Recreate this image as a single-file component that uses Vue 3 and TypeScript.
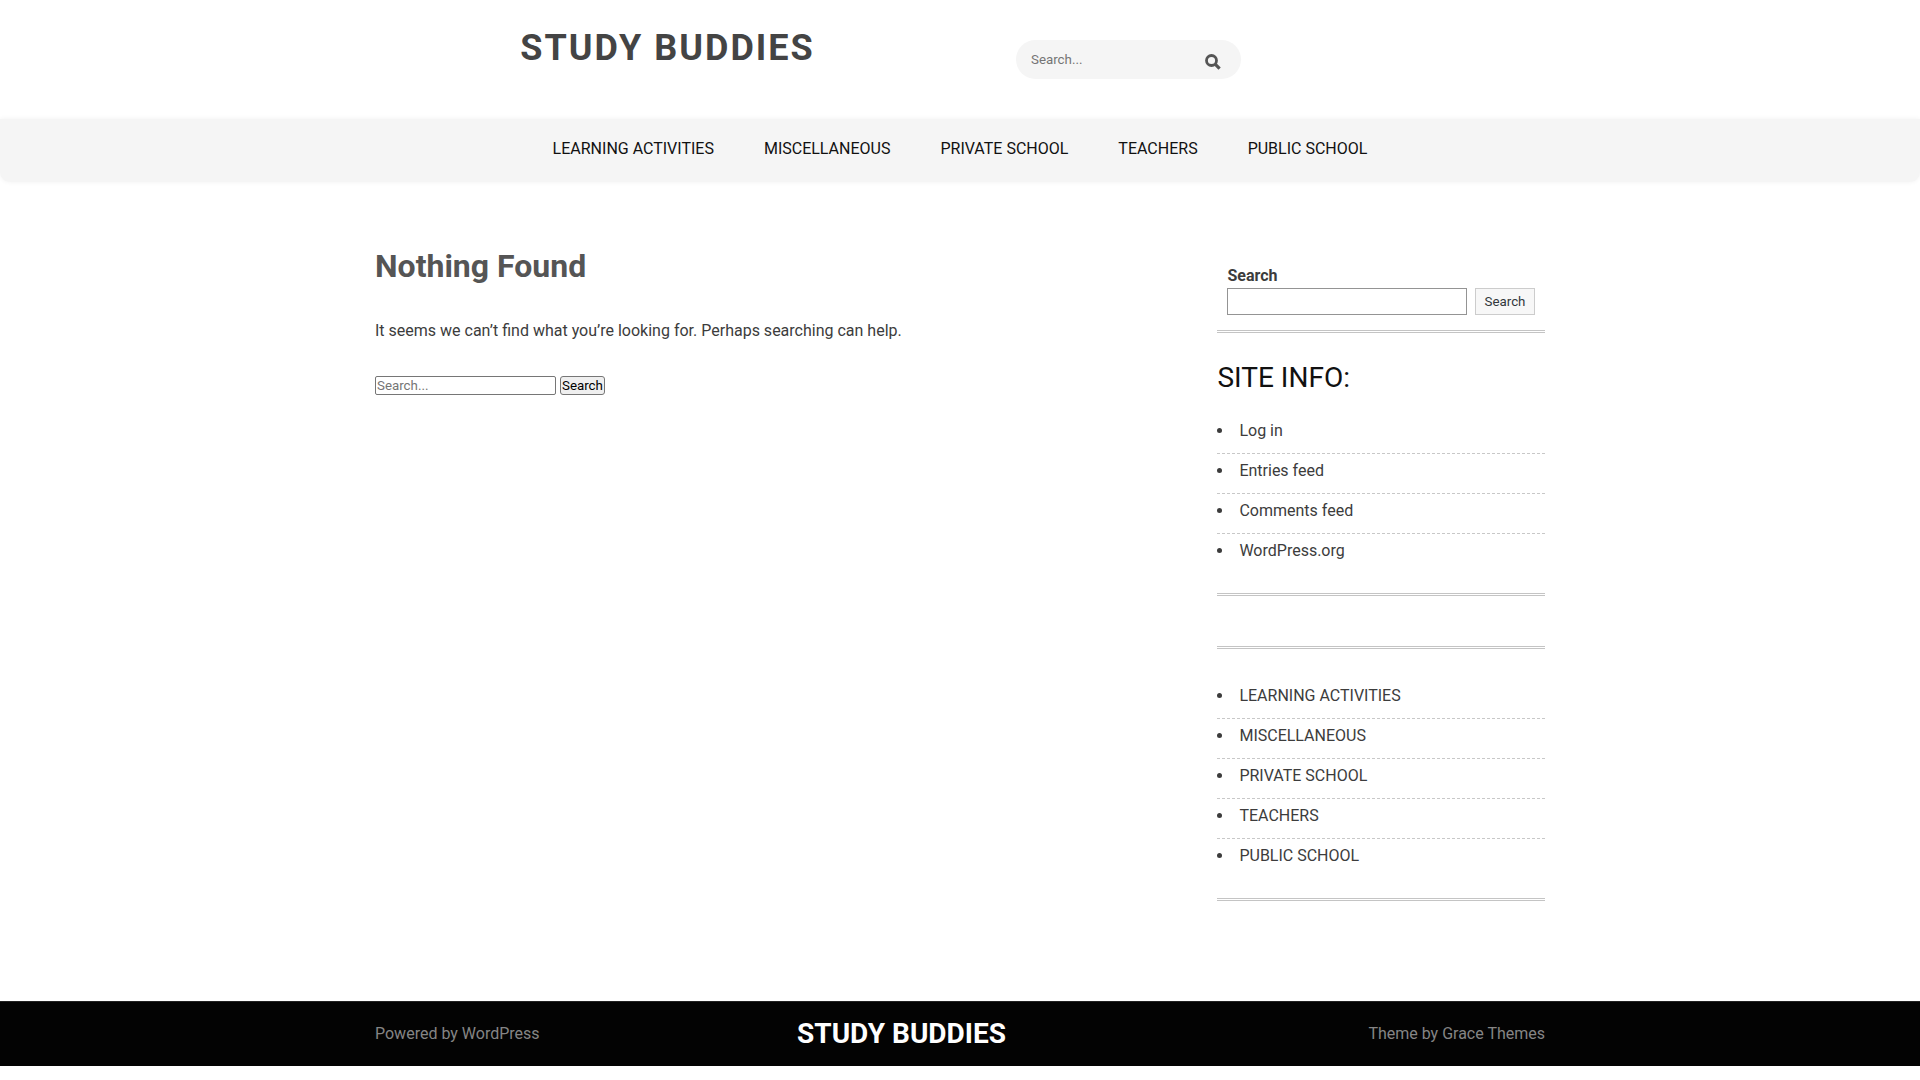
<script setup lang="ts">
import { ref } from 'vue'

interface LinkItem {
  label: string
  href: string
}

const categories: LinkItem[] = [
  { label: 'LEARNING ACTIVITIES', href: '#learning-activities' },
  { label: 'MISCELLANEOUS', href: '#miscellaneous' },
  { label: 'PRIVATE SCHOOL', href: '#private-school' },
  { label: 'TEACHERS', href: '#teachers' },
  { label: 'PUBLIC SCHOOL', href: '#public-school' },
]

const siteLinks: LinkItem[] = [
  { label: 'Log in', href: '#login' },
  { label: 'Entries feed', href: '#feed' },
  { label: 'Comments feed', href: '#comments' },
  { label: 'WordPress.org', href: '#wordpress' },
]

const headerQuery = ref('')
const pageQuery = ref('')
const sidebarQuery = ref('')
</script>

<template>
  <div class="site">
    <header class="header container">
      <div class="logo">
        <h1><a href="#home">STUDY BUDDIES</a></h1>
      </div>
      <form class="header-search" role="search" @submit.prevent>
        <input v-model="headerQuery" type="search" placeholder="Search..." aria-label="Search" />
        <button type="submit" aria-label="Search">
          <svg viewBox="0 0 16 16" width="16" height="16" aria-hidden="true">
            <circle cx="6.5" cy="6.5" r="5" fill="none" stroke="#555" stroke-width="2.8" />
            <path d="M10.4 10.4 L14.6 14.6" stroke="#555" stroke-width="3.2" />
          </svg>
        </button>
      </form>
    </header>

    <nav class="nav">
      <ul>
        <li v-for="item in categories" :key="item.label">
          <a :href="item.href">{{ item.label }}</a>
        </li>
      </ul>
    </nav>

    <div class="content container">
      <main>
        <h2>Nothing Found</h2>
        <p>It seems we can’t find what you’re looking for. Perhaps searching can help.</p>
        <form class="page-search" role="search" @submit.prevent>
          <input v-model="pageQuery" type="search" placeholder="Search..." aria-label="Search for" />
          <button type="submit">Search</button>
        </form>
      </main>

      <aside>
        <section class="widget search-widget">
          <form role="search" @submit.prevent>
            <label for="sidebar-search">Search</label>
            <div class="search-row">
              <input id="sidebar-search" v-model="sidebarQuery" type="search" />
              <button type="submit">Search</button>
            </div>
          </form>
        </section>
        <section class="widget">
          <h3>SITE INFO:</h3>
          <ul>
            <li v-for="item in siteLinks" :key="item.label">
              <a :href="item.href">{{ item.label }}</a>
            </li>
          </ul>
        </section>
        <section class="widget"></section>
        <section class="widget">
          <ul>
            <li v-for="item in categories" :key="item.label">
              <a :href="item.href">{{ item.label }}</a>
            </li>
          </ul>
        </section>
      </aside>
    </div>

    <footer class="footer">
      <div class="footer-inner container">
        <span>Powered by WordPress</span>
        <h2>STUDY BUDDIES</h2>
        <span class="credit">Theme by Grace Themes</span>
      </div>
    </footer>
  </div>
</template>

<style>
body {
  margin: 0;
  background: #fff;
}
</style>

<style scoped>
.site {
  font-family: Roboto, 'Liberation Sans', sans-serif;
  font-size: 16px;
  line-height: 24px;
  color: #3c3c3c;
}

.site * {
  box-sizing: border-box;
}

a {
  color: inherit;
  text-decoration: none;
}

h1,
h2,
h3,
p,
ul {
  margin: 0;
  padding: 0;
}

input,
button {
  font-family: inherit;
}

.container {
  width: 100%;
  max-width: 1170px;
  margin: 0 auto;
}

.header {
  display: flex;
  align-items: flex-start;
  padding-bottom: 40px;
}

.logo {
  width: 50%;
  padding-top: 24px;
  text-align: center;
}

.logo h1 {
  font-size: 36px;
  line-height: 48px;
  letter-spacing: 2px;
  color: #444;
}

.header-search {
  display: flex;
  align-items: center;
  width: 225px;
  height: 39px;
  margin: 40px 0 0 56px;
  padding: 0 20px 0 15px;
  border-radius: 20px;
  background: #f5f5f5;
}

.header-search input {
  flex: 1;
  min-width: 0;
  padding: 0;
  border: 0;
  outline: 0;
  background: transparent;
}

.header-search button {
  display: flex;
  padding: 4px 0 0;
  border: 0;
  background: transparent;
}

.nav {
  padding: 18px 0 21px;
  border-radius: 0 0 10px 10px;
  background: #f5f5f5;
  box-shadow: 0 0 5px rgba(0, 0, 0, 0.06);
}

.nav ul {
  display: flex;
  justify-content: center;
  gap: 50px;
  list-style: none;
  color: #111;
}

.content {
  display: flex;
  justify-content: space-between;
  padding: 60px 0 70px;
}

main h2 {
  margin-bottom: 29px;
  font-size: 32px;
  line-height: 48px;
  color: #555;
}

main p {
  margin-bottom: 33px;
}

.page-search {
  display: flex;
  gap: 4px;
}

.page-search input {
  width: 181px;
  height: 19px;
  padding: 1px;
  border: 1px solid #767676;
  border-radius: 2px;
}

.page-search button {
  height: 19px;
  padding: 0 1px;
  border: 1px solid #767676;
  border-radius: 3px;
  background: #efefef;
  line-height: 15px;
  color: #000;
}

aside {
  width: 28%;
  padding-top: 22px;
}

.widget {
  margin-bottom: 30px;
  padding-bottom: 20px;
  border-bottom: 3px double #c4c4c4;
}

.search-widget {
  margin-bottom: 24px;
  padding: 0 10px 15px;
}

.search-widget label {
  display: block;
  font-weight: 700;
}

.search-row {
  display: flex;
  gap: 8px;
}

.search-row input {
  flex: 1;
  min-width: 0;
  height: 27px;
  border: 1px solid #949494;
  border-radius: 0;
}

.search-row button {
  width: 60px;
  height: 27px;
  padding: 0;
  border: 1px solid #ccc;
  background: #f7f7f7;
  color: #32373c;
}

.widget h3 {
  margin-bottom: 15px;
  font-size: 28px;
  font-weight: 400;
  line-height: 42px;
  color: #111;
}

.widget ul {
  list-style: disc inside;
}

.widget li {
  padding: 5px 0 10px;
  border-bottom: 1px dashed #c8c8c8;
}

.widget li:last-child {
  border-bottom: 0;
}

.footer {
  border-top: 1px solid #222;
  background: #030303;
  color: #858585;
}

.footer-inner {
  display: grid;
  grid-template-columns: 30% 30% 40%;
  align-items: center;
  padding: 12px 0;
}

.footer h2 {
  font-size: 28px;
  line-height: 40px;
  text-align: center;
  color: #fff;
}

.credit {
  text-align: right;
}
</style>
